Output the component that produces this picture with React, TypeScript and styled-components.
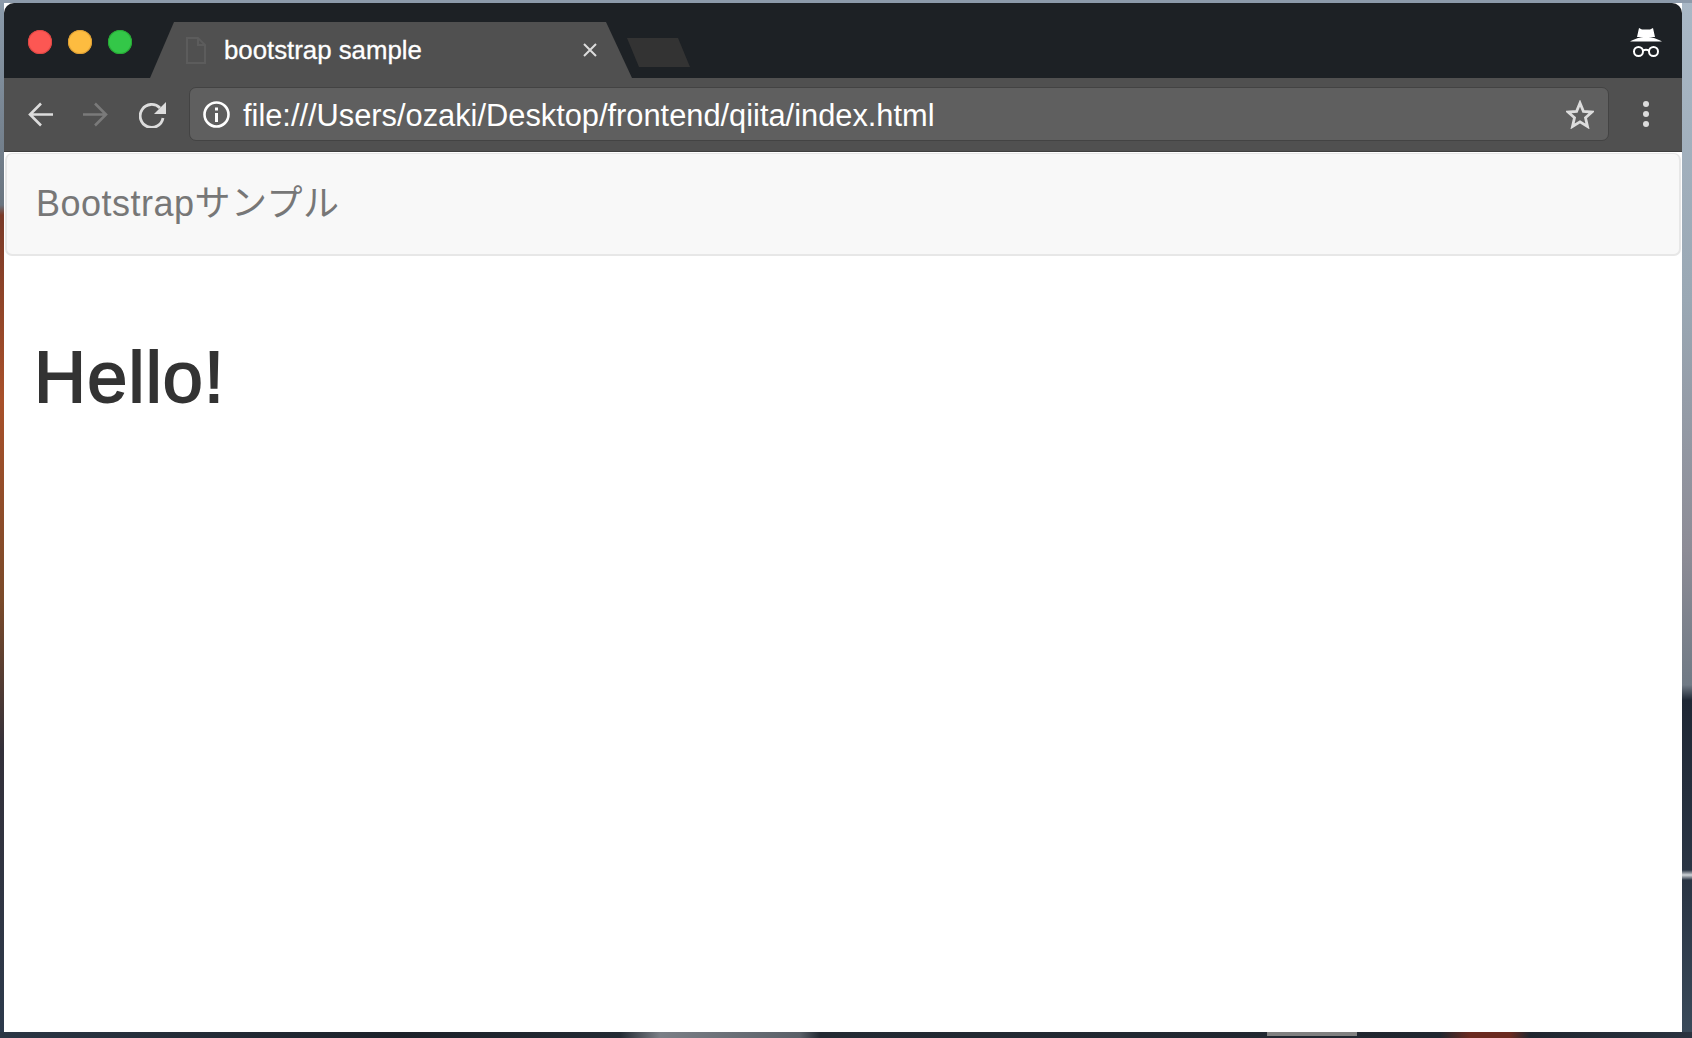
import styled, { createGlobalStyle } from "styled-components";

const GlobalStyle = createGlobalStyle`
  html, body {
    margin: 0;
    padding: 0;
    height: 100%;
    overflow: hidden;
  }
  body {
    font-family: "Liberation Sans", "Noto Sans CJK JP", sans-serif;
  }
`;

// the wallpaper only shows as thin strips round the window
const Desktop = styled.div`
  position: relative;
  width: 1692px;
  height: 1038px;
  box-sizing: border-box;
  padding: 3px 10px 6px 4px;
  background:
    linear-gradient(to bottom, #8d9bab, #8d9bab) left top / 100% 3px no-repeat,
    linear-gradient(
        to right,
        #2b3644 0,
        #1c2129 400px,
        #232a33 620px,
        #7b7f86 660px,
        #5a6068 800px,
        #232a33 820px,
        #20262f 1440px,
        #6b2a20 1470px,
        #6b2a20 1510px,
        #20262f 1530px,
        #2a3340 100%
      )
      left bottom / 100% 6px no-repeat,
    linear-gradient(
        to bottom,
        #8b9bab 0,
        #6a7580 205px,
        #7a3a28 215px,
        #a8502a 400px,
        #7a4a2a 600px,
        #33303a 750px,
        #2c3a4c 100%
      )
      left top / 4px 100% no-repeat,
    linear-gradient(
        to bottom,
        #a9b8c6 0,
        #9aa8b4 300px,
        #8d8c96 550px,
        #707a85 685px,
        #1f2835 700px,
        #2a3544 870px,
        #cfd4d8 875px,
        #2a3544 880px,
        #3a4a5a 100%
      )
      right top / 10px 100% no-repeat;
`;

const DockMark = styled.div`
  position: absolute;
  left: 1267px;
  bottom: 2px;
  width: 90px;
  height: 4px;
  background: #808080;
`;

const Window = styled.div`
  height: 100%;
  display: flex;
  flex-direction: column;
  border-radius: 10px 10px 12px 12px;
  overflow: hidden;
  background: #fff;
`;

const TitleBar = styled.div`
  height: 75px;
  flex: none;
  display: flex;
  align-items: flex-end;
  background: #1d2125;
  padding-right: 20px;
`;

const Lights = styled.div`
  display: flex;
  gap: 16px;
  padding: 0 0 24px 24px;
`;

const Light = styled.span<{ $color: string; $edge: string }>`
  width: 24px;
  height: 24px;
  border-radius: 50%;
  background: ${(p) => p.$color};
  box-shadow: inset 0 0 0 1px ${(p) => p.$edge};
`;

const Tab = styled.div`
  width: 482px;
  height: 56px;
  margin-left: 18px;
  display: flex;
  align-items: center;
  background: #505050;
  clip-path: polygon(24px 0, 456px 0, 482px 100%, 0 100%);
`;

const FileIcon = styled.svg`
  flex: none;
  margin-left: 36px;
`;

const TabTitle = styled.span`
  flex: 1;
  margin-left: 18px;
  color: #fff;
  font-size: 25.8px;
  -webkit-text-stroke: 0.3px #fff;
`;

const CloseIcon = styled.svg`
  flex: none;
  margin-right: 35px;
`;

const NewTab = styled.div`
  width: 63px;
  height: 29px;
  margin: 0 0 11px -5px;
  background: #333333;
  clip-path: polygon(0 0, 51px 0, 63px 100%, 12px 100%);
`;

const Spacer = styled.div`
  flex: 1;
`;

const IncognitoIcon = styled.svg`
  margin-bottom: 21px;
`;

const Toolbar = styled.div`
  height: 74px;
  flex: none;
  display: flex;
  align-items: center;
  box-sizing: border-box;
  background: #505050;
  border-bottom: 1px solid #3e3e3e;
  padding: 0 0 1px 23px;
`;

const NavGroup = styled.div`
  display: flex;
  align-items: center;
  gap: 30px;
  margin-right: 23px;
`;

const Omnibox = styled.div`
  width: 1420px;
  height: 54px;
  flex: none;
  box-sizing: border-box;
  display: flex;
  align-items: center;
  padding: 0 14px 0 13px;
  background: #5f5f5f;
  border: 1px solid #434343;
  border-radius: 7px;
`;

const Url = styled.span`
  flex: 1;
  margin-left: 13px;
  padding-top: 3px;
  color: #fff;
  font-size: 30.8px;
`;

const Dots = styled.div`
  margin-left: 34px;
  display: flex;
  flex-direction: column;
  gap: 4px;
`;

const Dot = styled.span`
  width: 6px;
  height: 6px;
  border-radius: 50%;
  background: #dcdcdc;
`;

const NavBar = styled.nav`
  height: 103px;
  flex: none;
  box-sizing: border-box;
  display: flex;
  align-items: center;
  margin: 1px 1px 0;
  padding: 0 0 0 29px;
  background: #f8f8f8;
  border: 2px solid #e7e7e7;
  border-top-width: 1px;
  border-radius: 7px;
`;

const Brand = styled.a`
  color: #777;
  font-size: 36px;
  line-height: 40px;
  letter-spacing: 0.5px;
  text-decoration: none;
`;

const Content = styled.main`
  padding-left: 30px;
`;

const Heading = styled.h1`
  margin: 81px 0 0;
  color: #333;
  font-size: 72px;
  font-weight: 500;
  line-height: 80px;
  letter-spacing: 1.2px;
  -webkit-text-stroke: 1.8px #333;
`;

export default function App() {
  return (
    <>
      <GlobalStyle />
      <Desktop>
        <Window>
          <TitleBar>
            <Lights>
              <Light $color="#fc5753" $edge="#df4744" />
              <Light $color="#fdbc40" $edge="#de9f34" />
              <Light $color="#33c748" $edge="#27aa35" />
            </Lights>
            <Tab>
              <FileIcon width="20" height="27" viewBox="0 0 20 27" fill="none" stroke="#5c5c5c" strokeWidth="2">
                <path d="M1 1h11l7 7v18H1z" />
                <path d="M12 1v7h7" />
              </FileIcon>
              <TabTitle>bootstrap sample</TabTitle>
              <CloseIcon width="14" height="14" viewBox="0 0 14 14" stroke="#dcdcdc" strokeWidth="2">
                <path d="M1 1l12 12M13 1L1 13" />
              </CloseIcon>
            </Tab>
            <NewTab />
            <Spacer />
            <IncognitoIcon width="32" height="30" viewBox="0 0 32 30" fill="#fff">
              <path d="M9 1l3 1.500h8L23 1l2 9H7z" />
              <path d="M0 14.500C5 12 9 10 16 10s11 2 16 4.500z" />
              <circle cx="8.500" cy="24.500" r="4.500" fill="none" stroke="#fff" strokeWidth="2" />
              <circle cx="23.500" cy="24.500" r="4.500" fill="none" stroke="#fff" strokeWidth="2" />
              <path d="M13 23.500q3-1.500 6 0" fill="none" stroke="#fff" strokeWidth="2" />
            </IncognitoIcon>
          </TitleBar>
          <Toolbar>
            <NavGroup>
              <svg width="26" height="25" viewBox="0 0 26 25" fill="none" stroke="#dcdcdc" strokeWidth="2.600">
                <path d="M26 12.500H3M14 1.500L3 12.500l11 11" />
              </svg>
              <svg width="26" height="25" viewBox="0 0 26 25" fill="none" stroke="#7a7a7a" strokeWidth="2.600">
                <path d="M0 12.500h23M12 1.500l11 11-11 11" />
              </svg>
              <svg width="27" height="27" viewBox="0 0 27 27" fill="none" stroke="#dcdcdc" strokeWidth="2.800">
                <path d="M24 17a11.500 11.500 0 1 1-3-10" />
                <path d="M27 1v12H15z" fill="#dcdcdc" stroke="none" />
              </svg>
            </NavGroup>
            <Omnibox>
              <svg width="27" height="27" viewBox="0 0 27 27" fill="none" stroke="#fff" strokeWidth="2.600">
                <circle cx="13.500" cy="13.500" r="12" />
                <path d="M13.500 12V21" strokeWidth="3" />
                <path d="M13.500 6.500v3" strokeWidth="3" />
              </svg>
              <Url>file:///Users/ozaki/Desktop/frontend/qiita/index.html</Url>
              <svg width="28" height="29" viewBox="0 0 28 29" fill="none" stroke="#dcdcdc" strokeWidth="2.800">
                <path d="M14 3l3.400 8.300 8.600.7-6.500 5.800 2 8.700-7.500-4.600-7.500 4.600 2-8.700L2 12l8.600-.7z" />
              </svg>
            </Omnibox>
            <Dots>
              <Dot />
              <Dot />
              <Dot />
            </Dots>
          </Toolbar>
          <NavBar>
            <Brand href="#">Bootstrapサンプル</Brand>
          </NavBar>
          <Content>
            <Heading>Hello!</Heading>
          </Content>
        </Window>
        <DockMark />
      </Desktop>
    </>
  );
}
